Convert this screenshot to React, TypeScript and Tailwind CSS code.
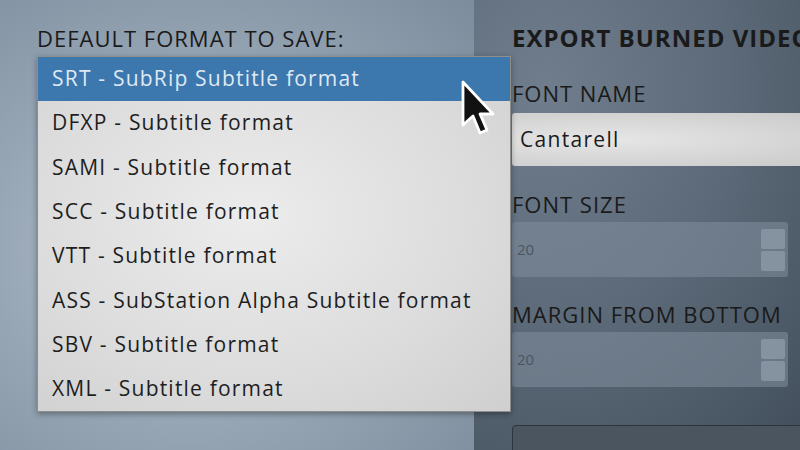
import React from 'react'

const formats = [
  'SRT - SubRip Subtitle format',
  'DFXP - Subtitle format',
  'SAMI - Subtitle format',
  'SCC - Subtitle format',
  'VTT - Subtitle format',
  'ASS - SubStation Alpha Subtitle format',
  'SBV - Subtitle format',
  'XML - Subtitle format',
]

function SpinField({ value }: { value: string }) {
  return (
    <div className="flex h-[55px] w-[276px] items-center justify-between rounded-[3px] bg-[#7d8b99]/60 pl-[5px] pr-[3px]">
      <span className="text-[15px] text-[#4a5562]">{value}</span>
      <div className="flex flex-col gap-[2px]">
        <div className="h-[20px] w-[24px] rounded-[2px] bg-[#8593a1]" />
        <div className="h-[20px] w-[24px] rounded-[2px] bg-[#8593a1]" />
      </div>
    </div>
  )
}

export default function App() {
  return (
    <div
      className="relative flex h-[450px] w-[800px] overflow-hidden text-[#1a1a1a]"
      style={{ fontFamily: '"Open Sans", "DejaVu Sans", sans-serif' }}
    >
      {/* left settings panel */}
      <div className="w-[474px] shrink-0 bg-[radial-gradient(ellipse_at_40%_55%,#b4c0cc_0%,#97a6b5_50%,#7c8c9c_100%)] pl-[37px] pt-[24px]">
        <div className="whitespace-nowrap text-[22px] leading-[28px] tracking-[1px]">DEFAULT FORMAT TO SAVE:</div>
      </div>

      {/* right export panel */}
      <div className="flex-1 bg-[radial-gradient(ellipse_at_20%_20%,#6f7d8c_0%,#5c6a79_45%,#3f4b57_100%)] pl-[38px] pt-[24px]">
        <div className="whitespace-nowrap text-[24px] font-bold leading-[28px] tracking-[1px]">EXPORT BURNED VIDEO</div>
        <div className="mt-[27px] text-[22px] leading-[28px] tracking-[1px]">FONT NAME</div>
        <div className="mt-[6px] flex h-[53px] w-[320px] items-center rounded-l-[3px] bg-[radial-gradient(ellipse_at_30%_50%,#e6e6e6_0%,#c9c9c9_100%)] pl-[8px] text-[21px] tracking-[1.3px]">
          Cantarell
        </div>
        <div className="mt-[24px] text-[22px] leading-[28px] tracking-[1px]">FONT SIZE</div>
        <div className="mt-[4px]">
          <SpinField value="20" />
        </div>
        <div className="mt-[23px] whitespace-nowrap text-[22px] leading-[28px] tracking-[1px]">MARGIN FROM BOTTOM</div>
        <div className="mt-[4px]">
          <SpinField value="20" />
        </div>
        <div className="mt-[38px] h-[40px] w-[320px] rounded-[4px] border border-[#2c343c] bg-[#4a5560]" />
      </div>

      {/* open dropdown menu */}
      <div className="absolute left-[37px] top-[56px] w-[474px] border border-[#8e8e8e] bg-[radial-gradient(ellipse_at_45%_45%,#ececec_0%,#dcdcdc_60%,#cfcfcf_100%)] shadow-[0_2px_6px_rgba(0,0,0,0.35)]">
        {formats.map((f, i) => (
          <div
            key={f}
            className={
              i === 0
                ? 'flex h-[44px] items-center whitespace-nowrap bg-[#3c77ae] pl-[14px] text-[21px] tracking-[1.2px] text-[#dfe9f3]'
                : 'flex h-[44.3px] items-center whitespace-nowrap pl-[14px] text-[21px] tracking-[1.2px] text-[#1e1e1e]'
            }
          >
            {f}
          </div>
        ))}
      </div>

      {/* mouse cursor */}
      <svg className="absolute left-[460px] top-[79px]" width="40" height="62" viewBox="0 0 20 31">
        <path
          d="M1.5 1.5 L1.5 23 L6.5 18.5 L10 27 L13.5 25.5 L10 17.5 L16.5 17.5 Z"
          fill="#111"
          stroke="#fff"
          strokeWidth="1.4"
          strokeLinejoin="round"
        />
      </svg>
    </div>
  )
}
